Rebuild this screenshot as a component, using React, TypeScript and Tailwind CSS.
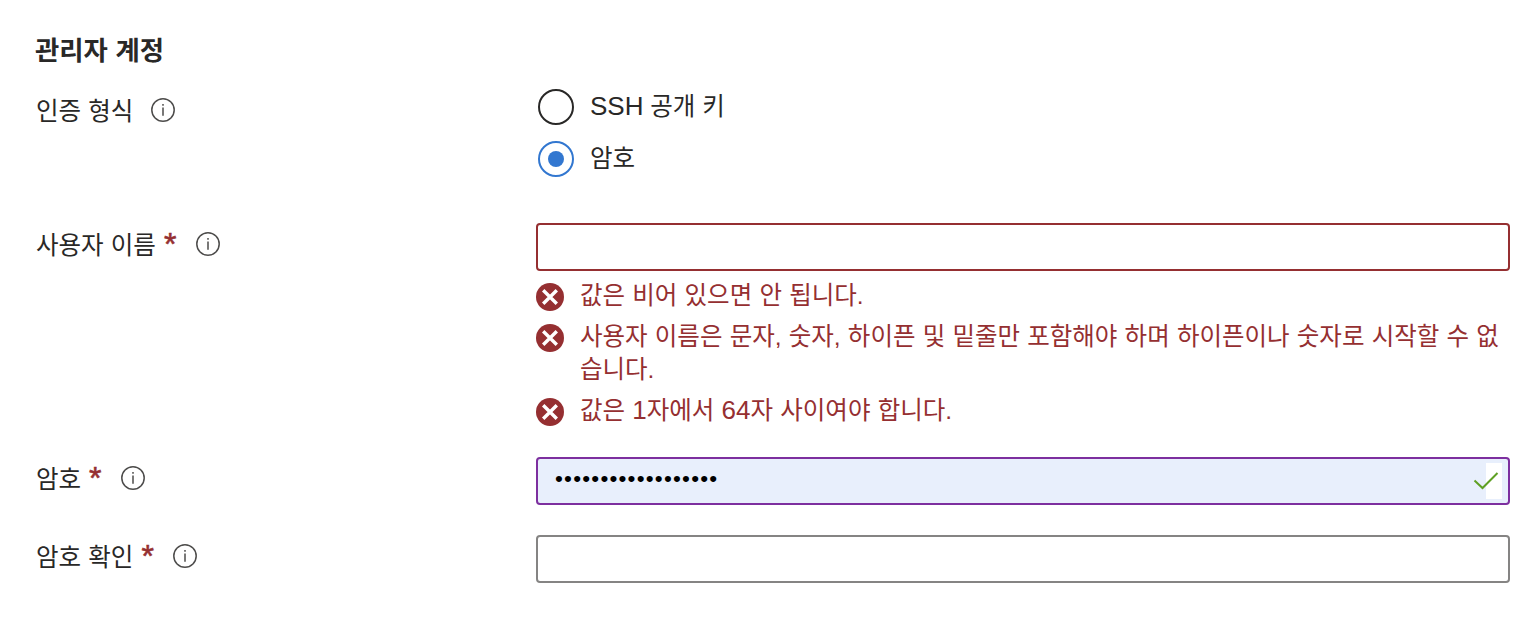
import { ReactNode, useState } from 'react';
import { twMerge } from 'tailwind-merge';

export default function App() {
  const [authType, setAuthType] = useState('password');

  return (
    <main className="min-h-[618px] bg-white pt-[34px] pr-2 pl-9 font-['Liberation_Sans','Noto_Sans_CJK_KR',sans-serif] text-[24.5px] leading-[33px] tracking-normal text-[#292827] [word-spacing:0.4px]">
      <h2 className="-ml-px h-[34px] text-[26.4px] leading-[34px] font-bold">
        관리자 계정
      </h2>

      <section className="mt-[21px] flex">
        <Label className="mt-[5px]">인증 형식</Label>
        <div className="flex flex-col gap-4 pl-0.5">
          <Radio
            checked={authType === 'ssh'}
            onSelect={() => setAuthType('ssh')}
          >
            <span className="text-[26px]">SSH</span> 공개 키
          </Radio>
          <Radio
            checked={authType === 'password'}
            onSelect={() => setAuthType('password')}
          >
            암호
          </Radio>
        </div>
      </section>

      <section className="mt-[46px] flex">
        <Label className="mt-[5px]" required>
          사용자 이름
        </Label>
        <div className="grow">
          <Input type="text" className="border-[#952f31]" />
          <ul className="mt-2 space-y-2 text-[#952f31]">
            <ErrorItem>값은 비어 있으면 안 됩니다.</ErrorItem>
            <ErrorItem>
              사용자 이름은 문자, 숫자, 하이픈 및 밑줄만 포함해야 하며
              하이픈이나 숫자로 시작할 수 없습니다.
            </ErrorItem>
            <ErrorItem>
              값은 <span className="text-[26px]">1</span>자에서{' '}
              <span className="text-[26px]">64</span>자 사이여야 합니다.
            </ErrorItem>
          </ul>
        </div>
      </section>

      <section className="mt-[30px] flex">
        <Label className="mt-[5px]" required>
          암호
        </Label>
        <div className="relative grow">
          <Input
            type="password"
            defaultValue="azureuserpassword1"
            className="border-[#7d2f9f] bg-[#e8effc] pb-[5px] pl-[17px] text-[22.5px] tracking-[1.2px]"
          />
          <span className="absolute top-1.5 right-2 h-9 w-4 bg-white" />
          <svg
            viewBox="0 0 26 20"
            className="absolute top-3.5 right-[11px] h-5 w-[26px]"
            fill="none"
            stroke="#5fa024"
            strokeWidth="2"
          >
            <path d="M1.5 9.5 9.5 17 24.5 2" />
          </svg>
        </div>
      </section>

      <section className="mt-[30px] flex">
        <Label className="mt-[5px]" required>
          암호 확인
        </Label>
        <div className="grow">
          <Input type="password" className="border-[#858483]" />
        </div>
      </section>
    </main>
  );
}

/*
 *
 * LABEL
 *
 */

type LabelProps = {
  children: ReactNode;
  className?: string;
  required?: boolean;
};

function Label({ children, className, required }: LabelProps) {
  return (
    <div
      className={twMerge('flex h-[33px] w-[500px] shrink-0', className)}
    >
      <span className="pt-px">{children}</span>
      {required && (
        <span className="ml-2 w-3 text-[32px] leading-[33px] text-[#952f31] [-webkit-text-stroke:0.6px_#952f31]">
          *
        </span>
      )}
      <InfoIcon className={required ? 'ml-5' : 'ml-[18px]'} />
    </div>
  );
}

function InfoIcon({ className }: { className?: string }) {
  return (
    <svg
      viewBox="0 0 24 24"
      className={twMerge('mt-1 h-6 w-6 shrink-0', className)}
      fill="none"
      stroke="#4d4c4b"
      strokeWidth="1.5"
    >
      <circle cx="12" cy="12" r="11.2" />
      <path d="M12 9.5V17.8M12 6V7.8" />
    </svg>
  );
}

/*
 *
 * FIELDS
 *
 */

type InputProps = {
  type: string;
  defaultValue?: string;
  className?: string;
};

function Input({ className, ...props }: InputProps) {
  return (
    <input
      {...props}
      className={twMerge(
        'block h-12 w-full rounded-[4px] border-2 bg-white px-4 text-[26px] text-black outline-none',
        className,
      )}
    />
  );
}

type RadioProps = {
  checked: boolean;
  children: ReactNode;
  onSelect(): void;
};

function Radio({ checked, children, onSelect }: RadioProps) {
  return (
    <button
      role="radio"
      aria-checked={checked}
      onClick={onSelect}
      className="flex h-9 gap-4"
    >
      <span
        className={twMerge(
          'flex h-9 w-9 items-center justify-center rounded-full border-2 border-[#292827]',
          checked && 'border-[#3277d0]',
        )}
      >
        {checked && <span className="h-4 w-4 rounded-full bg-[#3277d0]" />}
      </span>
      <span className="pt-px">{children}</span>
    </button>
  );
}

function ErrorItem({ children }: { children: ReactNode }) {
  return (
    <li className="flex gap-4">
      <svg viewBox="0 0 28 28" className="mt-1 h-7 w-7 shrink-0">
        <circle cx="14" cy="14" r="14" fill="#952f31" />
        <path d="m7.2 7.2 13.6 13.6m0-13.6L7.2 20.8" stroke="#fff" strokeWidth="3.4" />
      </svg>
      <span>{children}</span>
    </li>
  );
}
